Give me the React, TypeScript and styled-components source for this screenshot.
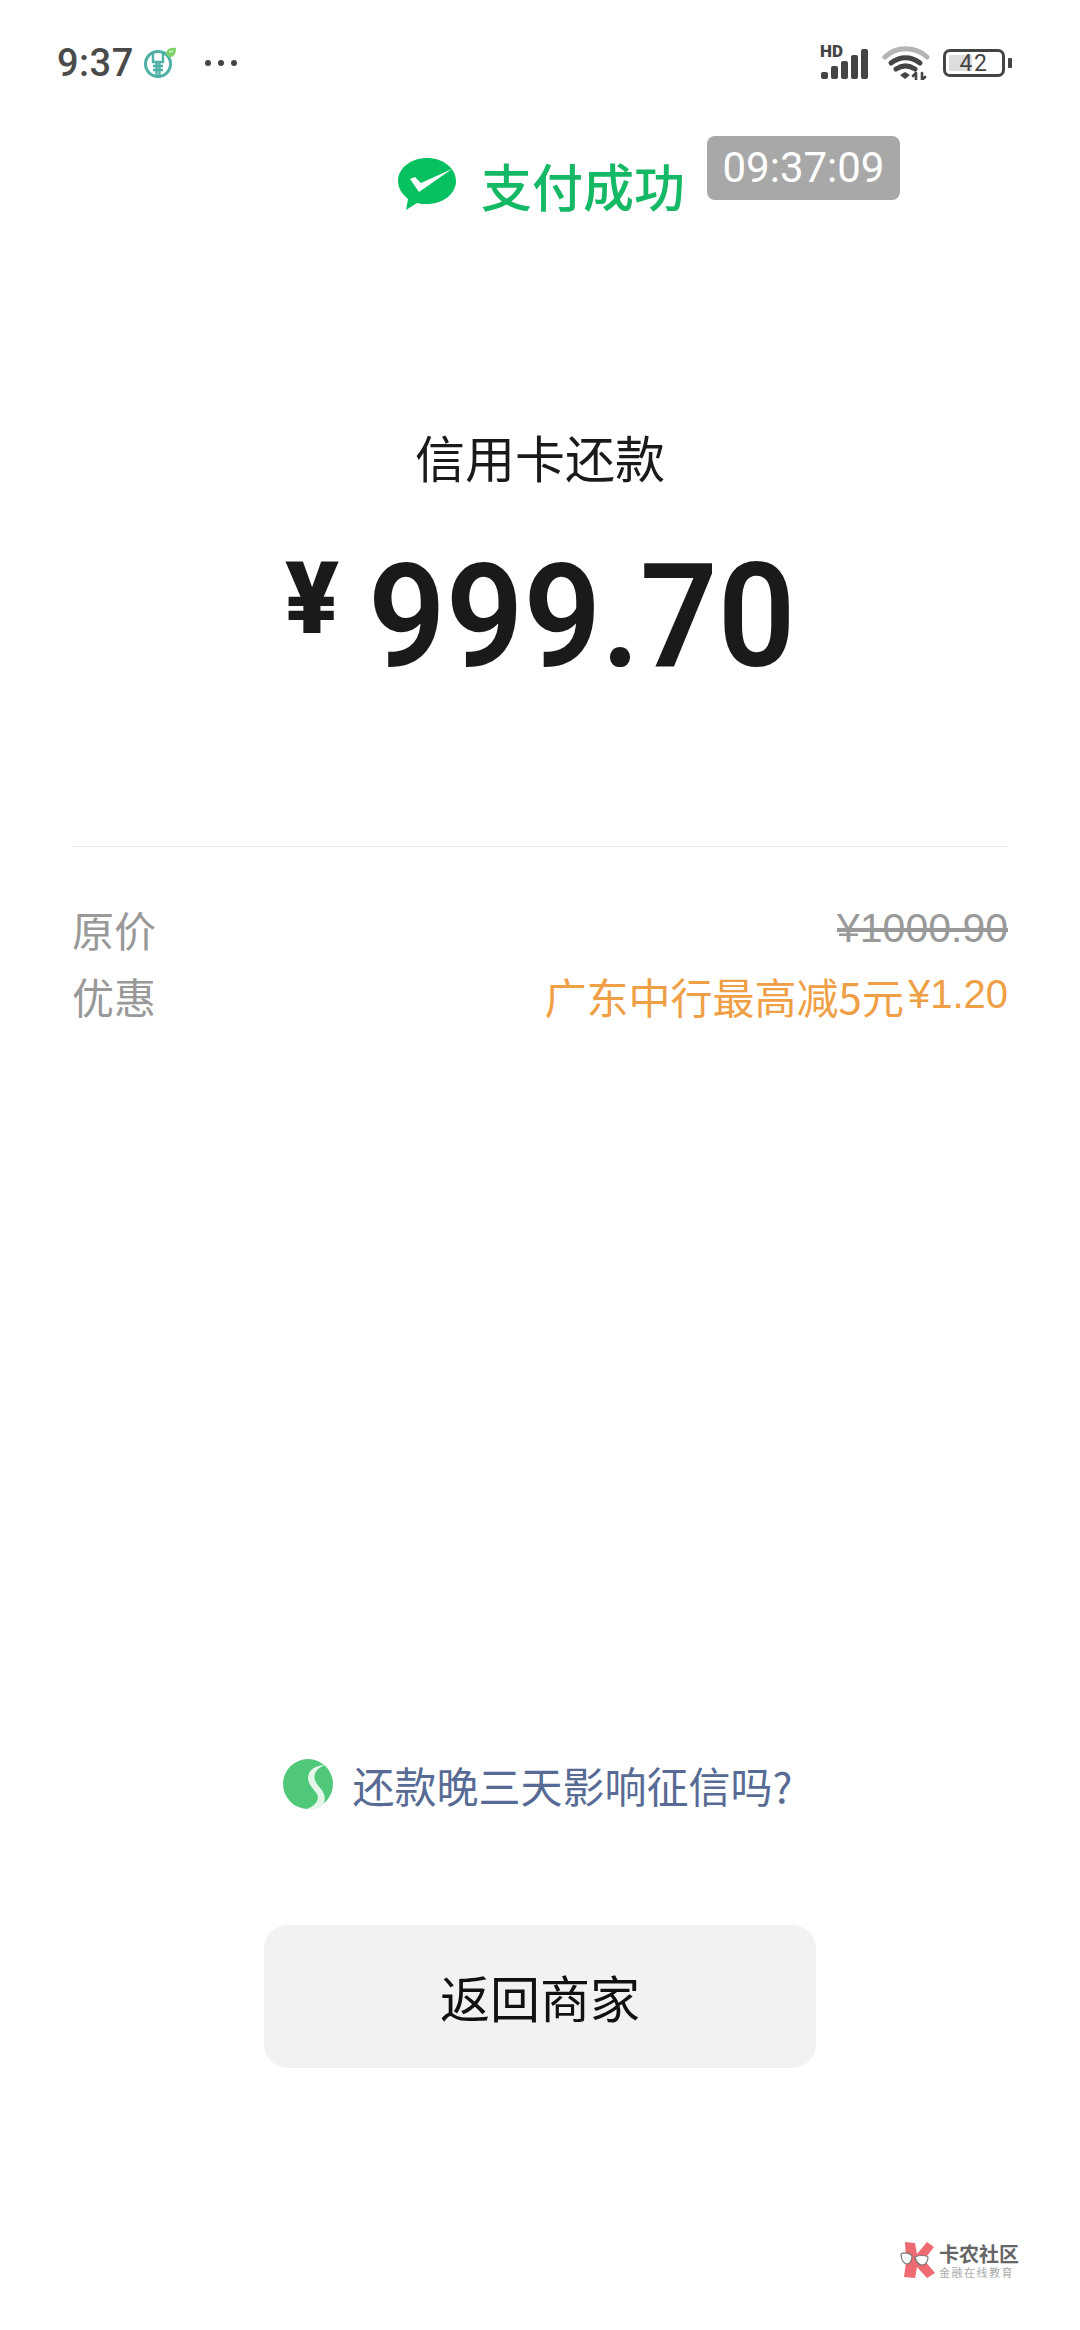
import styled, { createGlobalStyle } from 'styled-components'

const CJK = `"Noto Sans CJK SC", "Noto Sans", sans-serif`

const GlobalStyle = createGlobalStyle`
html, body {
    margin: 0;
    padding: 0;
    background: #ffffff;
}
`

const BankIcon = () => (
    <svg width="36" height="34" viewBox="0 0 36 34">
        <circle cx="16" cy="18" r="12.5" fill="none" stroke="#4fb0a6" strokeWidth="3" />
        <path d="M11 5v11h10V5M14.5 16v15M17.5 16v15M11 20h10M11 24h10" fill="none" stroke="#4fb0a6" strokeWidth="2.4" />
        <path d="M24 6c2-4 6-5 10-4 0 4-1 8-5 9-3 0-5-2-5-5z" fill="#7ed36a" />
        <path d="M27 6l4-1" stroke="#ffffff" strokeWidth="1" />
    </svg>
)

const SignalIcon = () => (
    <svg width="50" height="34" viewBox="0 0 50 34" fill="#444444">
        <rect x="1" y="26" width="7" height="7" rx="2" />
        <rect x="11" y="20" width="7" height="13" rx="2" />
        <rect x="21" y="15" width="7" height="18" rx="2" />
        <rect x="31" y="9" width="7" height="24" rx="2" />
        <rect x="41" y="3" width="7" height="30" rx="2" />
    </svg>
)

const WifiIcon = () => (
    <svg width="48" height="34" viewBox="0 0 48 34" fill="none" strokeLinecap="round">
        <path d="M3 11C14 0 33 0 45 11" stroke="#b4b4b4" strokeWidth="5" />
        <path d="M9 17c9-7 20-7 29 0" stroke="#444444" strokeWidth="5" />
        <path d="M14 23c6-4 13-4 19 0" stroke="#444444" strokeWidth="5" />
        <path d="M18 29l5-3 5 3-5 4z" fill="#444444" />
        <path d="M34 27v7M40 27v7M31 30l3-3M43 31l-3 3" stroke="#444444" strokeWidth="2.6" />
    </svg>
)

const PayIcon = () => (
    <svg width="60" height="56" viewBox="0 0 60 56">
        <path
            d="M30 1C14 1 1 11 1 24c0 7 4 13 10 18l-2 11 11-7c3 1 6 1 10 1 16 0 29-10 29-23S46 1 30 1z"
            fill="#07c160"
        />
        <path d="M13 22l5-2 6 6L55 12 22 35z" fill="#ffffff" />
    </svg>
)

const SesameIcon = () => (
    <svg width="52" height="52" viewBox="0 0 52 52">
        <circle cx="26" cy="26" r="25" fill="#4fc87a" />
        <path
            d="M43 7c-9 0-17 5-17 13 0 7 6 11 9 16 3 6-2 12-10 15 6 1 10 0 14-2 5-5 5-12 0-18-4-5-8-9-6-15 1-4 5-7 10-9z"
            fill="#e3f6e8"
        />
    </svg>
)

const MarkIcon = () => (
    <svg width="36" height="38" viewBox="0 0 36 38">
        <path d="M5 1l10 1 2 11L27 1l7 5-10 13 11 13-8 5-10-11-2 11-11-1 2-15z" fill="#ee6b72" />
        <path d="M1 13c4-2 9-1 11 2 0 4-2 8-5 8s-6-4-6-10zM15 16c4-2 10-2 13 0 0 4-2 8-6 8-4 0-6-4-7-8z" fill="#ffffff" stroke="#777777" strokeWidth="1.2" />
    </svg>
)

const App = () => {
    return (
        <Page>
            <GlobalStyle />
            <StatusBar>
                <StatusLeft>
                    <Clock>9:37</Clock>
                    <BankIcon />
                    <Dots>
                        <Dot />
                        <Dot />
                        <Dot />
                    </Dots>
                </StatusLeft>
                <StatusRight>
                    <SignalHold>
                        <Hd>HD</Hd>
                        <SignalIcon />
                    </SignalHold>
                    <WifiIcon />
                    <BatteryHold>
                        <Battery>
                            <BatteryFill />
                            <BatteryText>42</BatteryText>
                        </Battery>
                        <BatteryTip />
                    </BatteryHold>
                </StatusRight>
            </StatusBar>

            <Header>
                <PayIcon />
                <HeaderText>支付成功</HeaderText>
                <TimeBadge>09:37:09</TimeBadge>
            </Header>

            <Title>信用卡还款</Title>

            <Amount>
                <Currency>¥</Currency>
                <Value>999.70</Value>
            </Amount>

            <Divider />

            <Rows>
                <Row>
                    <RowLabel>原价</RowLabel>
                    <OldPrice>¥1000.90</OldPrice>
                </Row>
                <Row>
                    <RowLabel>优惠</RowLabel>
                    <Discount>
                        广东中行最高减5元<DiscountValue>¥1.20</DiscountValue>
                    </Discount>
                </Row>
            </Rows>

            <Spacer />

            <Promo>
                <SesameIcon />
                <PromoText>还款晚三天影响征信吗?</PromoText>
            </Promo>

            <BackButton>返回商家</BackButton>

            <Watermark>
                <MarkIcon />
                <div>
                    <MarkName>卡农社区</MarkName>
                    <MarkSub>金融在线教育</MarkSub>
                </div>
            </Watermark>
        </Page>
    )
}

export default App

const Page = styled.div`
position: relative;
width: 1080px;
height: 2330px;
overflow: hidden;
background: #ffffff;
display: flex;
flex-direction: column;
font-family: ${CJK};
`

const StatusBar = styled.div`
height: 34px;
padding: 46px 68px 0 57px;
display: flex;
justify-content: space-between;
align-items: center;
color: #444444;
`

const StatusLeft = styled.div`
display: flex;
align-items: center;
`

const Clock = styled.div`
font-family: Roboto, sans-serif;
font-size: 38px;
font-weight: 500;
letter-spacing: 0.5px;
margin-right: 8px;
color: #4a4a4a;
`

const Dots = styled.div`
display: flex;
gap: 7px;
margin-left: 27px;
`

const Dot = styled.span`
width: 6px;
height: 6px;
border-radius: 50%;
background: #444444;
`

const StatusRight = styled.div`
display: flex;
align-items: center;
`

const SignalHold = styled.div`
position: relative;
width: 50px;
height: 34px;
margin-right: 12px;
`

const Hd = styled.span`
position: absolute;
left: 0;
top: -2px;
font-family: Roboto, sans-serif;
font-size: 17px;
font-weight: 900;
line-height: 15px;
`

const BatteryHold = styled.div`
display: flex;
align-items: center;
margin-left: 13px;
`

const Battery = styled.div`
position: relative;
box-sizing: border-box;
width: 62px;
height: 28px;
border: 3.5px solid #444444;
border-radius: 7px;
display: flex;
justify-content: center;
align-items: center;
`

const BatteryFill = styled.div`
position: absolute;
left: 3px;
top: 3px;
bottom: 3px;
width: 23px;
background: #dddddd;
`

const BatteryText = styled.span`
position: relative;
font-family: Roboto, sans-serif;
font-size: 23px;
letter-spacing: 1.5px;
line-height: 21px;
`

const BatteryTip = styled.div`
width: 4px;
height: 10px;
margin-left: 3px;
border-radius: 1px;
background: #444444;
`

const Header = styled.div`
position: relative;
margin-top: 73px;
height: 64px;
padding-left: 2px;
display: flex;
justify-content: center;
align-items: center;
gap: 24px;
`

const HeaderText = styled.div`
font-size: 51px;
font-weight: 500;
line-height: 64px;
color: #15b864;
`

const TimeBadge = styled.div`
position: absolute;
left: 707px;
top: -17px;
width: 193px;
height: 64px;
border-radius: 8px;
background: #a8a8a8;
color: #ffffff;
font-family: Roboto, sans-serif;
font-size: 42px;
line-height: 64px;
text-align: center;
`

const Title = styled.div`
margin-top: 204px;
font-size: 50px;
line-height: 70px;
text-align: center;
color: #1a1a1a;
`

const Amount = styled.div`
margin-top: 51px;
height: 150px;
padding-left: 285px;
display: flex;
align-items: flex-start;
color: #1a1a1a;
font-family: Roboto, sans-serif;
font-weight: 600;
`

const Currency = styled.span`
margin-top: 7px;
width: 83px;
font-size: 100px;
font-weight: 900;
line-height: 100px;
`

const Value = styled.span`
font-size: 144px;
line-height: 150px;
transform: scaleX(0.945);
transform-origin: left center;
`

const Divider = styled.div`
margin: 154px 72px 0;
height: 1px;
background: #e8e8e8;
`

const Rows = styled.div`
margin-top: 52px;
padding: 0 72px;
display: flex;
flex-direction: column;
gap: 9px;
`

const Row = styled.div`
height: 58px;
display: flex;
justify-content: space-between;
align-items: center;
`

const RowLabel = styled.div`
font-size: 42px;
color: #999999;
`

const OldPrice = styled.div`
font-family: "Liberation Sans", sans-serif;
font-size: 41px;
color: #999999;
text-decoration: line-through;
`

const Discount = styled.div`
font-size: 42px;
color: #ef9f45;
display: flex;
align-items: center;
`

const DiscountValue = styled.span`
font-family: "Liberation Sans", sans-serif;
font-size: 40px;
margin: 0 0 2px 4px;
`

const Spacer = styled.div`
flex: 1;
`

const Promo = styled.div`
display: flex;
justify-content: center;
align-items: center;
gap: 19px;
height: 52px;
padding-right: 6px;
`

const PromoText = styled.div`
font-size: 42px;
color: #576b95;
`

const BackButton = styled.div`
margin: 115px auto 262px;
width: 552px;
height: 143px;
border-radius: 24px;
background: #f2f2f2;
color: #111111;
font-size: 50px;
line-height: 143px;
text-align: center;
`

const Watermark = styled.div`
position: absolute;
left: 900px;
top: 2241px;
display: flex;
gap: 3px;
align-items: center;
`

const MarkName = styled.div`
font-size: 20px;
font-weight: 700;
line-height: 23px;
color: #666666;
`

const MarkSub = styled.div`
font-size: 11px;
line-height: 14px;
letter-spacing: 1.5px;
color: #aaaaaa;
`
